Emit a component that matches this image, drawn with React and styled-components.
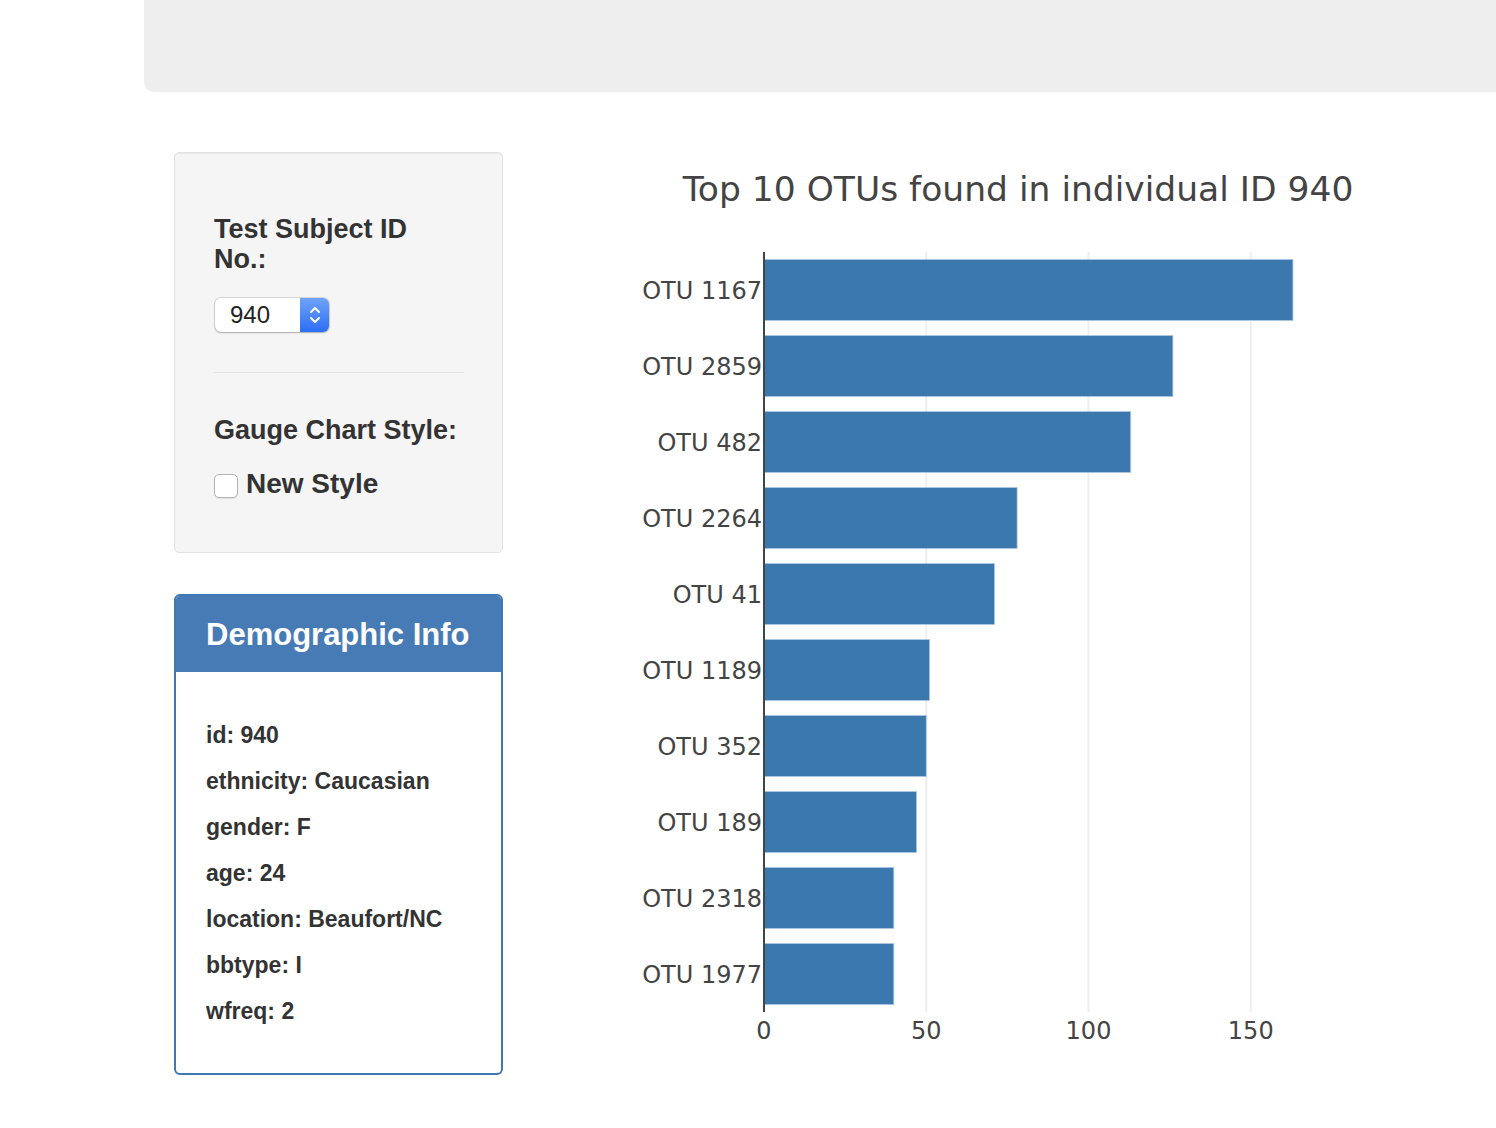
import React from "react";
import styled, { createGlobalStyle } from "styled-components";

const GlobalStyle = createGlobalStyle`
  html, body { margin: 0; padding: 0; background: #fff; }
  body {
    font-family: "Liberation Sans", Arial, Helvetica, sans-serif;
    color: #333;
    overflow: hidden;
  }
  * { box-sizing: border-box; }
`;

const Page = styled.div`
  width: 1496px;
  min-height: 1128px;
  padding-left: 144px;
`;

const Jumbotron = styled.div`
  height: 92px;
  margin-right: -40px;
  background: #eeeeee;
  border-bottom-left-radius: 10px;
  margin-bottom: 60px;
`;

const Row = styled.div`
  display: grid;
  grid-template-columns: 329px 1fr;
  column-gap: 30px;
  padding-left: 30px;
  align-items: start;
`;

const LeftColumn = styled.div`
  display: flex;
  flex-direction: column;
  gap: 41px;
`;

const Well = styled.div`
  background: #f5f5f5;
  border: 1px solid #e3e3e3;
  border-radius: 5px;
  box-shadow: inset 0 1px 1px rgba(0, 0, 0, 0.05);
  padding: 62px 39px 53px 39px;
`;

const FieldLabel = styled.div`
  font-size: 27px;
  font-weight: 700;
  line-height: 1.1;
  color: #333;
  max-width: 250px;
  margin-top: ${(p) => p.$mt || 0}px;
`;

const SelectBox = styled.div`
  margin-top: 24px;
  margin-left: 1px;
  width: 114px;
  height: 34px;
  display: flex;
  border-radius: 6px;
  background: #fff;
  box-shadow: 0 0 0 1px rgba(0, 0, 0, 0.12), 0 1px 2px rgba(0, 0, 0, 0.2);
  overflow: hidden;
`;

const SelectValue = styled.span`
  flex: 1;
  font-family: "Liberation Sans", Arial, sans-serif;
  font-size: 24px;
  line-height: 34px;
  padding-left: 15px;
  color: #222;
`;

const SelectArrows = styled.span`
  width: 29px;
  height: 34px;
  display: flex;
  align-items: center;
  justify-content: center;
  background: linear-gradient(#6fa3f8, #2c6ef5);
`;

const Divider = styled.hr`
  margin: 40px 0 0 0;
  border: 0;
  border-top: 1px solid #e4e4e4;
  width: 250px;
`;

const CheckRow = styled.label`
  display: flex;
  align-items: center;
  gap: 8px;
  margin-top: 23px;
  height: 30px;
`;

const CheckBox = styled.span`
  width: 24px;
  height: 24px;
  margin-top: 3px;
  border-radius: 5px;
  background: #fff;
  border: 1px solid #b3b3b3;
  box-shadow: 0 1px 1px rgba(0, 0, 0, 0.08);
`;

const CheckText = styled.span`
  font-size: 28px;
  font-weight: 700;
  line-height: 30px;
  color: #333;
`;

const Panel = styled.div`
  border: 2px solid #3f77b4;
  border-radius: 6px;
  overflow: hidden;
  background: #fff;
`;

const PanelHeading = styled.div`
  height: 76px;
  background: #477bb5;
  display: flex;
  align-items: center;
  padding: 2px 30px 0 30px;
  color: #fff;
  font-size: 31px;
  font-weight: 700;
`;

const PanelBody = styled.div`
  padding: 40px 30px 39px 30px;
`;

const InfoLine = styled.div`
  font-size: 23px;
  font-weight: 700;
  line-height: 46px;
  color: #333;
`;

const ChartSvg = styled.svg`
  display: block;
  font-family: "DejaVu Sans", Verdana, sans-serif;
`;

const otus = [
  { label: "OTU 1167", value: 163 },
  { label: "OTU 2859", value: 126 },
  { label: "OTU 482", value: 113 },
  { label: "OTU 2264", value: 78 },
  { label: "OTU 41", value: 71 },
  { label: "OTU 1189", value: 51 },
  { label: "OTU 352", value: 50 },
  { label: "OTU 189", value: 47 },
  { label: "OTU 2318", value: 40 },
  { label: "OTU 1977", value: 40 },
];

const info = [
  "id: 940",
  "ethnicity: Caucasian",
  "gender: F",
  "age: 24",
  "location: Beaufort/NC",
  "bbtype: I",
  "wfreq: 2",
];

function BarChart() {
  const x0 = 231;
  const top = 100;
  const bottom = 860;
  const scale = 3.245;
  const band = (bottom - top) / otus.length;
  const barH = band * 0.8;
  return (
    <ChartSvg width="963" height="920" viewBox="0 0 963 920">
      <text x="485" y="49" textAnchor="middle" fontSize="34.5" fill="#444">
        Top 10 OTUs found in individual ID 940
      </text>
      {[50, 100, 150].map((v) => (
        <line
          key={v}
          x1={x0 + v * scale}
          x2={x0 + v * scale}
          y1={top}
          y2={bottom}
          stroke="#eeeeee"
          strokeWidth="2"
        />
      ))}
      {otus.map((d, i) => {
        const y = top + i * band + (band - barH) / 2;
        return (
          <g key={d.label}>
            <rect
              x={x0}
              y={y}
              width={d.value * scale}
              height={barH}
              fill="#3a78ae"
              stroke="#a9c5e0"
              strokeWidth="0.8"
            />
            <text
              x={x0 - 2}
              y={top + i * band + band / 2 + 9}
              textAnchor="end"
              fontSize="24"
              fill="#444"
            >
              {d.label}
            </text>
          </g>
        );
      })}
      <line x1={x0} x2={x0} y1={top} y2={bottom} stroke="#444" strokeWidth="2" />
      {[0, 50, 100, 150].map((v) => (
        <text
          key={v}
          x={x0 + v * scale}
          y="887"
          textAnchor="middle"
          fontSize="24"
          fill="#444"
        >
          {v}
        </text>
      ))}
    </ChartSvg>
  );
}

export default function App() {
  return (
    <>
      <GlobalStyle />
      <Page>
        <Jumbotron />
        <Row>
          <LeftColumn>
            <Well>
              <FieldLabel>Test Subject ID No.:</FieldLabel>
              <SelectBox>
                <SelectValue>940</SelectValue>
                <SelectArrows>
                  <svg width="14" height="22" viewBox="0 0 14 22">
                    <path
                      d="M3 8 L7 4 L11 8 M3 14 L7 18 L11 14"
                      fill="none"
                      stroke="#fff"
                      strokeWidth="2"
                      strokeLinecap="round"
                      strokeLinejoin="round"
                    />
                  </svg>
                </SelectArrows>
              </SelectBox>
              <Divider />
              <FieldLabel $mt={43}>Gauge Chart Style:</FieldLabel>
              <CheckRow>
                <CheckBox />
                <CheckText>New Style</CheckText>
              </CheckRow>
            </Well>
            <Panel>
              <PanelHeading>Demographic Info</PanelHeading>
              <PanelBody>
                {info.map((line) => (
                  <InfoLine key={line}>{line}</InfoLine>
                ))}
              </PanelBody>
            </Panel>
          </LeftColumn>
          <BarChart />
        </Row>
      </Page>
    </>
  );
}
